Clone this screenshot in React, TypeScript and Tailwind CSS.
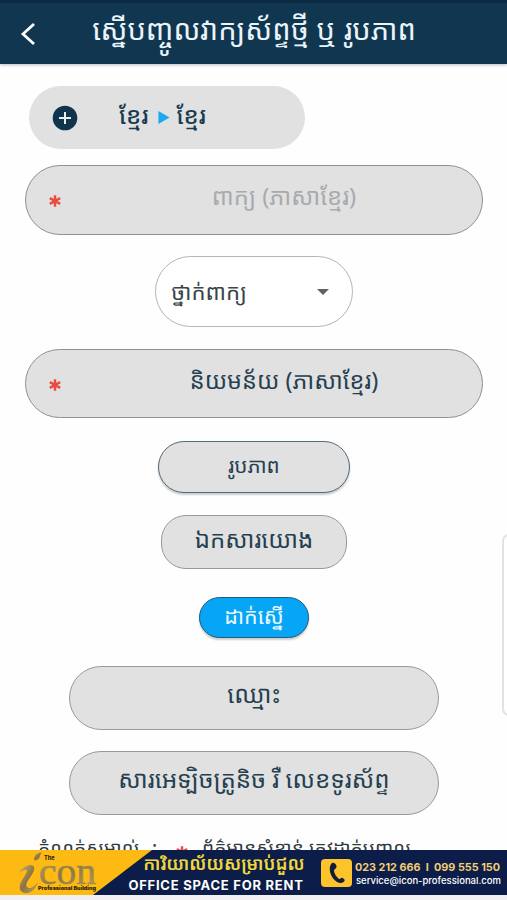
import type { ReactNode } from "react";

const FONT = "font-['Noto_Sans_Khmer','Noto_Sans','Open_Sans',sans-serif]";

function Label({ children, className }: { children: ReactNode; className: string }) {
  return <span className={`block whitespace-nowrap ${className}`}>{children}</span>;
}

function Asterisk({ className }: { className: string }) {
  return (
    <svg viewBox="0 0 12 12" className={className} stroke="#e94b41" strokeWidth="2.5">
      <path d="M6 0.3V11.7M0.8 3.2L11.2 8.8M11.2 3.2L0.8 8.8" />
    </svg>
  );
}

function Header() {
  return (
    <header className="flex h-16 shrink-0 items-center border-t-[3px] border-[#0b2b45] bg-[#11364f] pl-[20px] shadow-[0_1px_3px_rgba(20,40,80,0.3)]">
      <svg viewBox="0 0 16 24" className="h-6 w-4" fill="none" stroke="#fff" strokeWidth="2.8">
        <path d="M14 2L3 12L14 22" />
      </svg>
      <h1 className="ml-[54px] flex h-[50px] w-[328px] items-center justify-center pb-[9px]">
        <Label className="text-[29px] text-[#e9f4fb]">ស្នើបញ្ចូលវាក្យស័ព្ទថ្មី ឬ រូបភាព</Label>
      </h1>
    </header>
  );
}

function Banner() {
  return (
    <footer className="relative z-10 flex h-[45px] shrink-0 bg-[#0b1d48]">
      <div className="flex h-full w-[152px] bg-[#fdba12] pl-[18px] [clip-path:polygon(0_0,100%_0,93px_100%,0_100%)]">
        <svg viewBox="0 0 82 45" className="h-[45px] w-[82px]">
          <defs>
            <linearGradient id="metal" x1="0" y1="0" x2="1" y2="1">
              <stop offset="0" stopColor="#c9b273" />
              <stop offset="0.5" stopColor="#8c7340" />
              <stop offset="1" stopColor="#bda25a" />
            </linearGradient>
          </defs>
          <path d="M1 23C6 14 18 12 16 20C14 27 6 33 9 37C12 40 17 36 20 32C17 42 8 46 3 41C-2 35 8 26 9 21C8 18 4 21 1 23Z" fill="url(#metal)" />
          <path d="M16 9C16 5 20 2 24 3C21 4 23 9 19 10C17 11 16 10 16 9Z" fill="url(#metal)" />
          <text x="26" y="10" fontFamily="Inter" fontSize="5.5" fontWeight="800" fill="#2d260e">The</text>
          <text x="21" y="34" fontFamily="Liberation Serif" fontSize="38" fontWeight="400" textLength="57" lengthAdjust="spacingAndGlyphs" fill="url(#metal)" stroke="#a18a50" strokeWidth="0.7">con</text>
          <text x="20" y="39.5" fontFamily="Inter" fontSize="5.2" fontWeight="900" textLength="58" lengthAdjust="spacingAndGlyphs" fill="#2d260e">Professional Building</text>
        </svg>
      </div>
      <div className="-ml-[27px] flex h-full w-[182px] flex-col items-center">
        <div className="flex h-[27px] items-center justify-center pl-[16px]">
          <Label className="text-[18px] font-semibold text-[#f0d73c]">ការិយាល័យសម្រាប់ជួល</Label>
        </div>
        <Label className="font-['Inter'] text-[13px] leading-[16px] font-bold tracking-[0.75px] text-white">OFFICE SPACE FOR RENT</Label>
      </div>
      <div className="mt-[9px] ml-[14px] flex h-[28px] w-[31px] items-center justify-center rounded-[4px] bg-[#fdc32d]">
        <svg viewBox="0 0 20 24" className="h-[24px] w-[20px]" fill="#121b3b">
          <path d="M5 2C7 1 10 4 9.500 6C9 8 7 8 7 10C7.500 13 9.500 16 12 18C14 18 14 15 17 18C19 20 16 22 14 22C6 22 -1 8 5 2Z" />
        </svg>
      </div>
      <div className="ml-[3px] flex flex-col pt-[10px] font-['Inter'] whitespace-nowrap">
        <div className="flex h-[15px] w-[145px] items-center justify-between text-[10.8px] leading-[15px] font-bold text-[#f3cd74]">
          <span>023 212 666</span>
          <span>I</span>
          <span>099 555 150</span>
        </div>
        <span className="ml-[1px] text-[9.5px] leading-[11px] font-medium text-white">service@icon-professional.com</span>
      </div>
    </footer>
  );
}

export default function App() {
  return (
    <div className={`relative flex h-[900px] w-[507px] flex-col overflow-hidden bg-[#fefefe] text-[#263f50] ${FONT}`}>
      <Header />
      <main className="flex h-[786px] shrink-0 flex-col overflow-hidden">
        <div className="mt-[22px] ml-[29px] flex h-[63px] w-[276px] shrink-0 items-center rounded-full bg-[#e1e1e1] pl-[23px]">
          <svg viewBox="0 0 26 26" className="h-[26px] w-[26px]">
            <circle cx="13" cy="13" r="12.3" fill="#11344d" />
            <path d="M13 7V19M7 13H19" stroke="#e8edf0" strokeWidth="2" />
          </svg>
          <div className="ml-[41px] flex h-[30px] w-[87px] items-center justify-between pb-[3px]">
            <Label className="text-[23.5px] font-medium text-[#183b52]">ខ្មែរ</Label>
            <svg viewBox="0 0 12 14" className="mt-[3px] ml-[2px] h-[13px] w-3" fill="#1ba8ee"><path d="M0 0L12 7L0 14Z" /></svg>
            <Label className="text-[23.5px] font-medium text-[#183b52]">ខ្មែរ</Label>
          </div>
        </div>

        <div className="mt-[16px] ml-[25px] flex h-[70px] w-[458px] shrink-0 items-center rounded-full border-[1.5px] border-[#909090] bg-[#e1e1e1] pl-[23px]">
          <Asterisk className="mt-[2px] h-3 w-3" />
          <div className="ml-[145px] flex h-[40px] w-[156px] items-center justify-center pb-[6px]">
            <Label className="text-[23.8px] text-[#a7abaf]">ពាក្យ (ភាសាខ្មែរ)</Label>
          </div>
        </div>

        <div className="mt-[21px] ml-[155px] flex h-[71px] w-[198px] shrink-0 items-center justify-between rounded-full border-[1.5px] border-[#b5b5b5] bg-white pr-[23px] pl-[15px]">
          <Label className="text-[22.2px] text-[#3b4549]">ថ្នាក់ពាក្យ</Label>
          <svg viewBox="0 0 12 6" className="h-[6px] w-3" fill="#616161"><path d="M0 0H12L6 6Z" /></svg>
        </div>

        <div className="mt-[22px] ml-[25px] flex h-[69px] w-[458px] shrink-0 items-center rounded-full border-[1.5px] border-[#909090] bg-[#e1e1e1] pl-[23px]">
          <Asterisk className="mt-[2px] h-3 w-3" />
          <div className="ml-[128px] flex h-[40px] w-[190px] items-center justify-center pb-[6px]">
            <Label className="text-[23.5px]">និយមន័យ (ភាសាខ្មែរ)</Label>
          </div>
        </div>

        <div className="mt-[23px] ml-[158px] flex h-[52px] w-[192px] shrink-0 items-center justify-center rounded-full border-[1.5px] border-[#526b77] bg-[#e1e1e1] pb-[2px] shadow-[0_2px_2px_rgba(0,0,0,0.2)]">
          <Label className="text-[20.8px]">រូបភាព</Label>
        </div>
        <div className="mt-[22px] ml-[161px] flex h-[54px] w-[186px] shrink-0 items-center justify-center rounded-[25px] border-[1.5px] border-[#999] bg-[#e1e1e1] pb-[7px]">
          <Label className="text-[24px]">ឯកសារយោង</Label>
        </div>
        <div className="mt-[28px] ml-[199px] flex h-[41px] w-[110px] shrink-0 items-center justify-center rounded-full border-[1.5px] border-[#245c7c] bg-[#06a5f5] pb-[3px] shadow-[0_2px_2px_rgba(0,0,0,0.2)]">
          <Label className="text-[21.5px] text-[#e9f8ff]">ដាក់ស្នើ</Label>
        </div>
        <div className="mt-[28px] ml-[69px] flex h-[64px] w-[370px] shrink-0 items-center justify-center rounded-full border-[1.5px] border-[#999] bg-[#e1e1e1] pb-[8px]">
          <Label className="text-[24.2px]">ឈ្មោះ</Label>
        </div>
        <div className="mt-[21px] ml-[69px] flex h-[64px] w-[370px] shrink-0 items-center justify-center rounded-full border-[1.5px] border-[#999] bg-[#e1e1e1] pb-[7px]">
          <Label className="text-[24.2px]">សារអេទ្បិចត្រូនិច រឺ លេខទូរស័ព្ទ</Label>
        </div>
        <div className="mt-[18px] ml-[38px] flex h-[30px] w-[374px] shrink-0 items-start text-[19.2px] leading-[30px] text-[#303a40]">
          <Label className="w-[114px]">កំណត់សម្គាល់</Label>
          <Label className="w-[24px]">:</Label>
          <Asterisk className="mt-[13px] mr-[14px] h-3 w-3 shrink-0" />
          <Label className="">ព័ត៌មានសំខាន់ ត្រូវដាក់បញ្ចូល</Label>
        </div>
      </main>
      <Banner />
      <div className="h-[5px] bg-[#f2eff3]" />
      <div className="absolute top-[534px] -right-[10px] h-[182px] w-[15px] rounded-[7px] border-2 border-[#e2e2e2] bg-white" />
    </div>
  );
}
